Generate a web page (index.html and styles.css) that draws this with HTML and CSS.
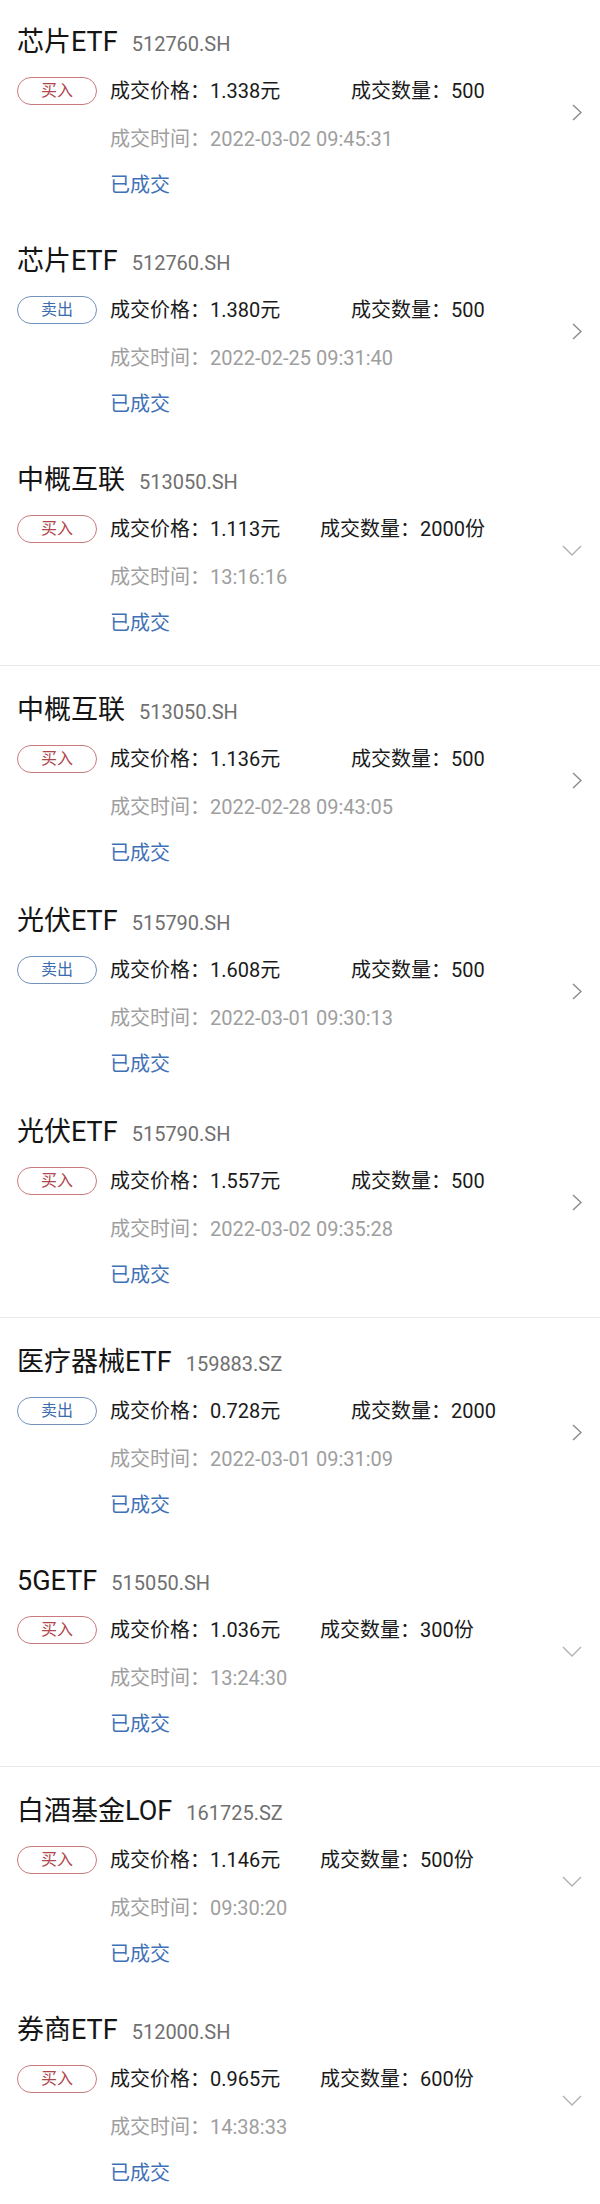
FILE: index.html
```html
<!DOCTYPE html>
<html lang="zh-CN">
<head>
<meta charset="utf-8">
<title>成交记录</title>
<link rel="stylesheet" href="styles.css">
</head>
<body>
<main class="list">

  <section class="group">
    <article class="trade">
      <div class="info">
        <div class="title"><span class="name">芯片ETF</span><span class="code">512760.SH</span></div>
        <div class="row"><span class="badge badge--buy">买入</span><span class="price">成交价格：1.338元</span><span class="qty">成交数量：500</span></div>
        <div class="time">成交时间：2022-03-02 09:45:31</div>
        <div class="status">已成交</div>
      </div>
      <svg class="chev-right" width="10" height="17" viewBox="0 0 10 17"><path d="M1 1 L9 8.5 L1 16" fill="none" stroke="#8a8a8a" stroke-width="1.4"/></svg>
    </article>
    <article class="trade">
      <div class="info">
        <div class="title"><span class="name">芯片ETF</span><span class="code">512760.SH</span></div>
        <div class="row"><span class="badge badge--sell">卖出</span><span class="price">成交价格：1.380元</span><span class="qty">成交数量：500</span></div>
        <div class="time">成交时间：2022-02-25 09:31:40</div>
        <div class="status">已成交</div>
      </div>
      <svg class="chev-right" width="10" height="17" viewBox="0 0 10 17"><path d="M1 1 L9 8.5 L1 16" fill="none" stroke="#8a8a8a" stroke-width="1.4"/></svg>
    </article>
    <article class="trade trade--today">
      <div class="info">
        <div class="title"><span class="name">中概互联</span><span class="code">513050.SH</span></div>
        <div class="row"><span class="badge badge--buy">买入</span><span class="price">成交价格：1.113元</span><span class="qty">成交数量：2000份</span></div>
        <div class="time">成交时间：13:16:16</div>
        <div class="status">已成交</div>
      </div>
      <svg class="chev-down" width="20" height="11" viewBox="0 0 20 11"><path d="M1 1 L10 10 L19 1" fill="none" stroke="#b0b0b0" stroke-width="1.4"/></svg>
    </article>
  </section>

  <section class="group group--tight">
    <article class="trade">
      <div class="info">
        <div class="title"><span class="name">中概互联</span><span class="code">513050.SH</span></div>
        <div class="row"><span class="badge badge--buy">买入</span><span class="price">成交价格：1.136元</span><span class="qty">成交数量：500</span></div>
        <div class="time">成交时间：2022-02-28 09:43:05</div>
        <div class="status">已成交</div>
      </div>
      <svg class="chev-right" width="10" height="17" viewBox="0 0 10 17"><path d="M1 1 L9 8.5 L1 16" fill="none" stroke="#8a8a8a" stroke-width="1.4"/></svg>
    </article>
    <article class="trade">
      <div class="info">
        <div class="title"><span class="name">光伏ETF</span><span class="code">515790.SH</span></div>
        <div class="row"><span class="badge badge--sell">卖出</span><span class="price">成交价格：1.608元</span><span class="qty">成交数量：500</span></div>
        <div class="time">成交时间：2022-03-01 09:30:13</div>
        <div class="status">已成交</div>
      </div>
      <svg class="chev-right" width="10" height="17" viewBox="0 0 10 17"><path d="M1 1 L9 8.5 L1 16" fill="none" stroke="#8a8a8a" stroke-width="1.4"/></svg>
    </article>
    <article class="trade">
      <div class="info">
        <div class="title"><span class="name">光伏ETF</span><span class="code">515790.SH</span></div>
        <div class="row"><span class="badge badge--buy">买入</span><span class="price">成交价格：1.557元</span><span class="qty">成交数量：500</span></div>
        <div class="time">成交时间：2022-03-02 09:35:28</div>
        <div class="status">已成交</div>
      </div>
      <svg class="chev-right" width="10" height="17" viewBox="0 0 10 17"><path d="M1 1 L9 8.5 L1 16" fill="none" stroke="#8a8a8a" stroke-width="1.4"/></svg>
    </article>
  </section>

  <section class="group">
    <article class="trade">
      <div class="info">
        <div class="title"><span class="name">医疗器械ETF</span><span class="code">159883.SZ</span></div>
        <div class="row"><span class="badge badge--sell">卖出</span><span class="price">成交价格：0.728元</span><span class="qty">成交数量：2000</span></div>
        <div class="time">成交时间：2022-03-01 09:31:09</div>
        <div class="status">已成交</div>
      </div>
      <svg class="chev-right" width="10" height="17" viewBox="0 0 10 17"><path d="M1 1 L9 8.5 L1 16" fill="none" stroke="#8a8a8a" stroke-width="1.4"/></svg>
    </article>
    <article class="trade trade--today">
      <div class="info">
        <div class="title"><span class="name">5GETF</span><span class="code">515050.SH</span></div>
        <div class="row"><span class="badge badge--buy">买入</span><span class="price">成交价格：1.036元</span><span class="qty">成交数量：300份</span></div>
        <div class="time">成交时间：13:24:30</div>
        <div class="status">已成交</div>
      </div>
      <svg class="chev-down" width="20" height="11" viewBox="0 0 20 11"><path d="M1 1 L10 10 L19 1" fill="none" stroke="#b0b0b0" stroke-width="1.4"/></svg>
    </article>
  </section>

  <section class="group group--last">
    <article class="trade trade--today">
      <div class="info">
        <div class="title"><span class="name">白酒基金LOF</span><span class="code">161725.SZ</span></div>
        <div class="row"><span class="badge badge--buy">买入</span><span class="price">成交价格：1.146元</span><span class="qty">成交数量：500份</span></div>
        <div class="time">成交时间：09:30:20</div>
        <div class="status">已成交</div>
      </div>
      <svg class="chev-down" width="20" height="11" viewBox="0 0 20 11"><path d="M1 1 L10 10 L19 1" fill="none" stroke="#b0b0b0" stroke-width="1.4"/></svg>
    </article>
    <article class="trade trade--today">
      <div class="info">
        <div class="title"><span class="name">券商ETF</span><span class="code">512000.SH</span></div>
        <div class="row"><span class="badge badge--buy">买入</span><span class="price">成交价格：0.965元</span><span class="qty">成交数量：600份</span></div>
        <div class="time">成交时间：14:38:33</div>
        <div class="status">已成交</div>
      </div>
      <svg class="chev-down" width="20" height="11" viewBox="0 0 20 11"><path d="M1 1 L10 10 L19 1" fill="none" stroke="#b0b0b0" stroke-width="1.4"/></svg>
    </article>
  </section>

</main>
</body>
</html>
```

FILE: styles.css
```css
* { box-sizing: border-box; }

html, body {
  margin: 0;
  padding: 0;
  background: #ffffff;
}

body {
  font-family: "Roboto", "Noto Sans CJK SC", sans-serif;
  color: #222222;
}

.list {
  display: flex;
  flex-direction: column;
}

.group {
  display: flex;
  flex-direction: column;
  gap: 46px;
  padding: 28px 0;
  border-bottom: 1px solid #e8e8e8;
}

.group:first-child { padding-top: 26px; }

.group--tight { gap: 38px; }

.group--last {
  border-bottom: none;
  padding-bottom: 16px;
}

.trade {
  display: flex;
  align-items: center;
  padding: 0 18px 0 17px;
}

.info {
  flex: 1;
  min-width: 0;
}

.title {
  display: flex;
  align-items: baseline;
  gap: 14px;
  height: 32px;
  line-height: 32px;
  white-space: nowrap;
}

.name {
  font-size: 27px;
  color: #141414;
}

.code {
  font-size: 20px;
  color: #707070;
}

.row {
  display: flex;
  align-items: center;
  height: 28px;
  margin-top: 19px;
  font-size: 20px;
  line-height: 28px;
  color: #1a1a1a;
  white-space: nowrap;
}

.badge {
  flex: none;
  width: 80px;
  height: 28px;
  margin-right: 13px;
  border: 1px solid;
  border-radius: 14px;
  font-size: 16px;
  line-height: 26px;
  text-align: center;
}

.badge--buy {
  color: #b0454a;
  border-color: #c97a7d;
}

.badge--sell {
  color: #3b6cae;
  border-color: #7392bb;
}

.price {
  width: 241px;
  flex: none;
}

.trade--today .price {
  width: 210px;
}

.time {
  margin-top: 20px;
  padding-left: 93px;
  font-size: 20px;
  line-height: 28px;
  color: #9e9e9e;
  white-space: nowrap;
}

.status {
  margin-top: 18px;
  padding-left: 93px;
  font-size: 20px;
  line-height: 28px;
  color: #3f71b6;
}

.chev-right,
.chev-down {
  flex: none;
  display: block;
}
```
